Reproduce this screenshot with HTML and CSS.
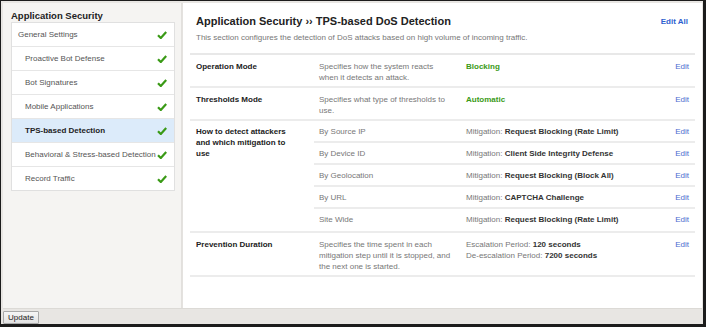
FILE: index.html
```html
<!DOCTYPE html>
<html>
<head>
<meta charset="utf-8">
<link rel="stylesheet" href="styles.css">
</head>
<body>
<div class="app">
  <div class="main">
    <aside class="sidebar">
      <div class="side-title">Application Security</div>
      <ul class="nav">
        <li class="nav-item top"><span>General Settings</span><svg class="check" viewBox="0 0 10 8"><path d="M1 4.2 L3.8 7 L9.2 1"/></svg></li>
        <li class="nav-item"><span>Proactive Bot Defense</span><svg class="check" viewBox="0 0 10 8"><path d="M1 4.2 L3.8 7 L9.2 1"/></svg></li>
        <li class="nav-item"><span>Bot Signatures</span><svg class="check" viewBox="0 0 10 8"><path d="M1 4.2 L3.8 7 L9.2 1"/></svg></li>
        <li class="nav-item"><span>Mobile Applications</span><svg class="check" viewBox="0 0 10 8"><path d="M1 4.2 L3.8 7 L9.2 1"/></svg></li>
        <li class="nav-item active"><span>TPS-based Detection</span><svg class="check" viewBox="0 0 10 8"><path d="M1 4.2 L3.8 7 L9.2 1"/></svg></li>
        <li class="nav-item"><span>Behavioral &amp; Stress-based Detection</span><svg class="check" viewBox="0 0 10 8"><path d="M1 4.2 L3.8 7 L9.2 1"/></svg></li>
        <li class="nav-item"><span>Record Traffic</span><svg class="check" viewBox="0 0 10 8"><path d="M1 4.2 L3.8 7 L9.2 1"/></svg></li>
      </ul>
    </aside>
    <section class="content">
      <div class="head">
        <div class="head-text">
          <h1 class="title">Application Security ›› TPS-based DoS Detection</h1>
          <p class="subtitle">This section configures the detection of DoS attacks based on high volume of incoming traffic.</p>
        </div>
        <a class="edit-all">Edit All</a>
      </div>
      <div class="rows">
        <div class="row">
          <div class="label">Operation Mode</div>
          <div class="desc">Specifies how the system reacts when it detects an attack.</div>
          <div class="value green">Blocking</div>
          <a class="edit">Edit</a>
        </div>
        <div class="row">
          <div class="label">Thresholds Mode</div>
          <div class="desc">Specifies what type of thresholds to use.</div>
          <div class="value green">Automatic</div>
          <a class="edit">Edit</a>
        </div>
        <div class="row group">
          <div class="label">How to detect attackers and which mitigation to use</div>
          <div class="subrows">
            <div class="subrow"><div class="desc">By Source IP</div><div class="value"><span class="muted">Mitigation:</span> <b>Request Blocking (Rate Limit)</b></div><a class="edit">Edit</a></div>
            <div class="subrow"><div class="desc">By Device ID</div><div class="value"><span class="muted">Mitigation:</span> <b>Client Side Integrity Defense</b></div><a class="edit">Edit</a></div>
            <div class="subrow"><div class="desc">By Geolocation</div><div class="value"><span class="muted">Mitigation:</span> <b>Request Blocking (Block All)</b></div><a class="edit">Edit</a></div>
            <div class="subrow"><div class="desc">By URL</div><div class="value"><span class="muted">Mitigation:</span> <b>CAPTCHA Challenge</b></div><a class="edit">Edit</a></div>
            <div class="subrow"><div class="desc">Site Wide</div><div class="value"><span class="muted">Mitigation:</span> <b>Request Blocking (Rate Limit)</b></div><a class="edit">Edit</a></div>
          </div>
        </div>
        <div class="row tall">
          <div class="label">Prevention Duration</div>
          <div class="desc">Specifies the time spent in each mitigation step until it is stopped, and the next one is started.</div>
          <div class="value"><span class="muted">Escalation Period:</span> <b>120 seconds</b><br><span class="muted">De-escalation Period:</span> <b>7200 seconds</b></div>
          <a class="edit">Edit</a>
        </div>
      </div>
    </section>
  </div>
  <div class="footer">
    <button class="btn">Update</button>
  </div>
</div>
</body>
</html>
```

FILE: styles.css
```css
* { box-sizing: border-box; }
html, body { margin: 0; padding: 0; }
body {
  width: 706px;
  height: 327px;
  overflow: hidden;
  font-family: "Liberation Sans", Arial, sans-serif;
  background: #e8e6e3;
  border: 1px solid #1c1c1c;
  border-bottom-width: 3px;
  border-right-width: 3px;
}
.app {
  display: flex;
  flex-direction: column;
  height: 100%;
  padding: 2px 1px 0 2px;
}
.main {
  display: flex;
  height: 306px;
  border-bottom: 1px solid #dcdad6;
}
.sidebar {
  width: 179px;
  background: #f5f4f2;
  border-right: 1px solid #e2e0dd;
  padding: 7px 6px 0 8px;
}
.side-title {
  font-size: 9.5px;
  font-weight: bold;
  color: #222;
  line-height: 11px;
  margin-bottom: 1px;
}
.nav {
  list-style: none;
  margin: 0;
  padding: 0;
  width: 164px;
  background: #fff;
  border: 1px solid #e0e0e0;
}
.nav-item {
  display: flex;
  align-items: center;
  justify-content: space-between;
  height: 24px;
  padding: 0 7px 0 13px;
  font-size: 8px;
  color: #555;
  border-top: 1px solid #e6e6e6;
}
.nav-item.top { border-top: none; height: 23px; padding-left: 6px; }
.nav-item.active {
  background: #dcebfa;
  color: #222;
  font-weight: bold;
}
.check {
  width: 10px;
  height: 8px;
  flex: none;
}
.check path {
  fill: none;
  stroke: #3a9a16;
  stroke-width: 2.2;
}
.content {
  flex: 1;
  background: #fff;
  border-left: 1px solid #e4e2df;
  padding: 0 7px 0 7px;
}
.head {
  display: flex;
  justify-content: space-between;
  align-items: flex-start;
  padding: 12px 7px 0 6px;
  height: 52px;
  border-bottom: 2px solid #e8e8e8;
}
.title {
  margin: 0;
  font-size: 11px;
  line-height: 13px;
  font-weight: bold;
  color: #222;
}
.subtitle {
  margin: 4px 0 0 0;
  font-size: 8px;
  line-height: 11px;
  color: #777;
}
.edit-all {
  font-size: 8px;
  font-weight: bold;
  color: #2e5fcf;
  line-height: 13px;
}
.row {
  display: grid;
  grid-template-columns: 124px 146px 1fr 30px;
  border-bottom: 2px solid #ececec;
  font-size: 8px;
  line-height: 11px;
  padding: 6px 0 3px 0;
}
.row.group {
  padding: 0;
}
.label {
  padding-left: 6px;
  font-weight: bold;
  color: #222;
}
.row.group .label { padding-top: 5px; padding-right: 24px; }
.desc {
  padding-left: 5px;
  padding-right: 11px;
  color: #777;
}
.row.tall .desc { padding-right: 2px; }
.value { padding-left: 6px; color: #222; }
.value b { font-weight: bold; color: #333; }
.value.green { color: #3a9a16; font-weight: bold; }
.muted { color: #777; }
.edit {
  color: #4a6bcf;
  text-align: right;
  padding-right: 6px;
}
.subrows {
  grid-column: 2 / 5;
  display: flex;
  flex-direction: column;
}
.subrow {
  display: grid;
  grid-template-columns: 146px 1fr 30px;
  padding: 5px 0 4px 0;
  border-bottom: 2px solid #ececec;
  height: 22px;
}
.subrow:last-child { border-bottom: none; }
.footer {
  flex: 1;
  display: flex;
  align-items: flex-start;
  padding: 2px 0 0 0;
}
.btn {
  font-family: "Liberation Sans", Arial, sans-serif;
  font-size: 8px;
  line-height: 10px;
  padding: 1px 4px;
  height: 13px;
  width: 36px;
  color: #222;
  background: linear-gradient(#f6f6f6, #e2e2e2);
  border: 1px solid #a9a9a9;
  border-radius: 1px;
}
```
